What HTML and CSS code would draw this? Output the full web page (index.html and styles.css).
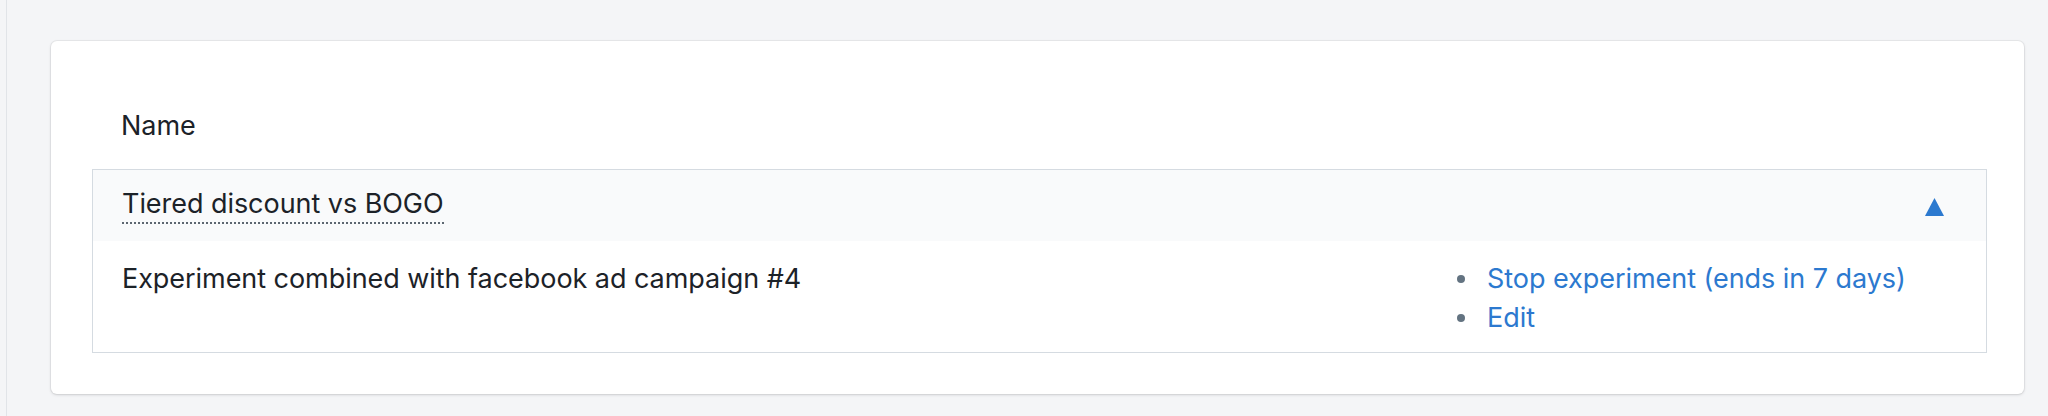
FILE: index.html
```html
<!DOCTYPE html>
<html lang="en">
<head>
<meta charset="utf-8">
<title>Experiments</title>
<link rel="stylesheet" href="styles.css">
</head>
<body>
<div class="page">
  <div class="rail"></div>
  <main class="main">
    <section class="card">
      <div class="col-head">Name</div>
      <div class="experiment">
        <div class="exp-head">
          <span class="exp-name">Tiered discount vs BOGO</span>
          <svg class="toggle" width="19" height="18" viewBox="0 0 19 18" aria-hidden="true"><polygon points="9.5,0 19,18 0,18" fill="#2c79cf"/></svg>
        </div>
        <div class="exp-body">
          <div class="exp-desc">Experiment combined with facebook ad campaign #4</div>
          <ul class="actions">
            <li class="action"><span class="dot"></span><a class="link" href="#">Stop experiment (ends in 7 days)</a></li>
            <li class="action"><span class="dot"></span><a class="link" href="#">Edit</a></li>
          </ul>
        </div>
      </div>
    </section>
  </main>
</div>
</body>
</html>
```

FILE: styles.css
```css
* { box-sizing: border-box; }
html, body { margin: 0; padding: 0; }
body {
  background: #f4f5f7;
  font-family: Inter, "Noto Sans", "Liberation Sans", sans-serif;
  font-size: 27px;
  letter-spacing: -0.05px;
  line-height: 39px;
  color: #1c2228;
  height: 416px;
  overflow: hidden;
}
.page {
  display: flex;
  height: 416px;
}
.rail {
  width: 7px;
  flex: none;
  border-right: 1px solid #e1e4e8;
}
.main {
  flex: 1;
  padding: 41px 24px 0 44px;
}
.card {
  background: #fff;
  border-radius: 6px;
  box-shadow: 0 0 0 1px rgba(63, 63, 68, 0.06), 0 1px 3px 0 rgba(63, 63, 68, 0.18);
  height: 353px;
  padding: 65px 37px 0 41px;
}
.col-head {
  padding-left: 29px;
  line-height: 40px;
}
.experiment {
  margin-top: 23px;
  border: 1px solid #d5dbe1;
}
.exp-head {
  background: #f9fafb;
  height: 71px;
  padding: 16px 42px 0 29px;
  display: flex;
  justify-content: space-between;
  align-items: flex-start;
}
.exp-name {
  border-bottom: 2px dotted #5c6670;
  line-height: 36px;
}
.toggle {
  margin-top: 12px;
  display: block;
}
.exp-body {
  display: grid;
  grid-template-columns: 1fr 499px;
  padding: 18px 30px 15px 29px;
}
.actions {
  list-style: none;
  margin: 0;
  padding: 0;
}
.action {
  display: flex;
  align-items: center;
}
.dot {
  width: 8px;
  height: 8px;
  border-radius: 50%;
  background: #637381;
  margin-right: 22px;
  flex: none;
}
.link {
  color: #2c79cf;
  text-decoration: none;
}
```
